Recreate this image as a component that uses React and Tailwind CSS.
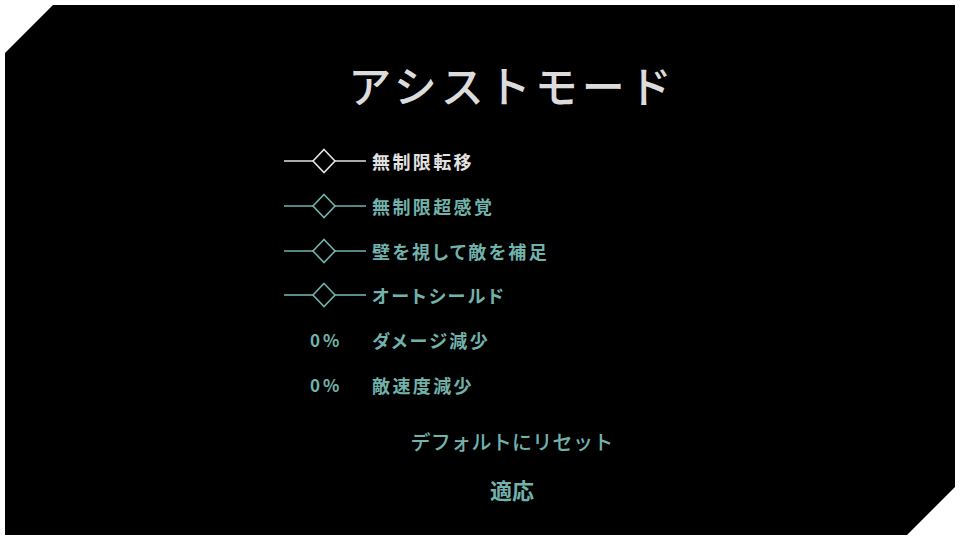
const jp = { fontFamily: '"Noto Sans CJK JP", "Noto Sans", sans-serif' };

const items = [
  { kind: "toggle", label: "無制限転移", active: true },
  { kind: "toggle", label: "無制限超感覚" },
  { kind: "toggle", label: "壁を視して敵を補足" },
  { kind: "toggle", label: "オートシールド" },
  { kind: "percent", value: "0%", label: "ダメージ減少" },
  { kind: "percent", value: "0%", label: "敵速度減少" },
];

const Toggle = ({ color }) => (
  <svg width="82" height="26" viewBox="0 0 82 26" fill="none" stroke={color} strokeWidth="1.6">
    <line x1="0" y1="13" x2="29" y2="13" />
    <line x1="51" y1="13" x2="82" y2="13" />
    <path d="M40 1.5 L51 13 L40 24.5 L29 13 Z" strokeLinejoin="miter" />
  </svg>
);

const Row = ({ item }) => {
  const text = item.active ? "text-[#e2e2e2]" : "text-[#72b2ac]";
  return (
    <div className={`flex items-center h-[44.7px] ${text}`}>
      <div className="w-[88px] flex items-center">
        {item.kind === "toggle" ? (
          <Toggle color={item.active ? "#e2e2e2" : "#72b2ac"} />
        ) : (
          <span className="pl-[26px] text-[17px] font-bold tracking-[3px]">{item.value}</span>
        )}
      </div>
      <span className="text-[18px] font-bold tracking-[2.4px] leading-none [font-feature-settings:'palt']">
        {item.label}
      </span>
    </div>
  );
};

export default function App() {
  return (
    <div className="w-[960px] h-[540px] bg-white p-[5px]" style={jp}>
      <div className="h-full bg-black [clip-path:polygon(48px_0,100%_0,100%_calc(100%-48px),calc(100%-48px)_100%,0_100%,0_48px)] flex flex-col items-center pl-[64px] pt-[58px]">
        <h1 className="text-[43px] leading-[43px] font-medium tracking-[4px] text-[#dcdcdc]">
          アシストモード
        </h1>
        <div className="self-start ml-[215px] mt-[33px]">
          {items.map((item) => (
            <Row key={item.label} item={item} />
          ))}
        </div>
        <button className="mt-[20px] text-[20px] leading-[30px] font-medium tracking-[0.3px] text-[#72b2ac]">
          デフォルトにリセット
        </button>
        <button className="mt-[17px] text-[22px] leading-[30px] font-bold text-[#72b2ac]">
          適応
        </button>
      </div>
    </div>
  );
}
